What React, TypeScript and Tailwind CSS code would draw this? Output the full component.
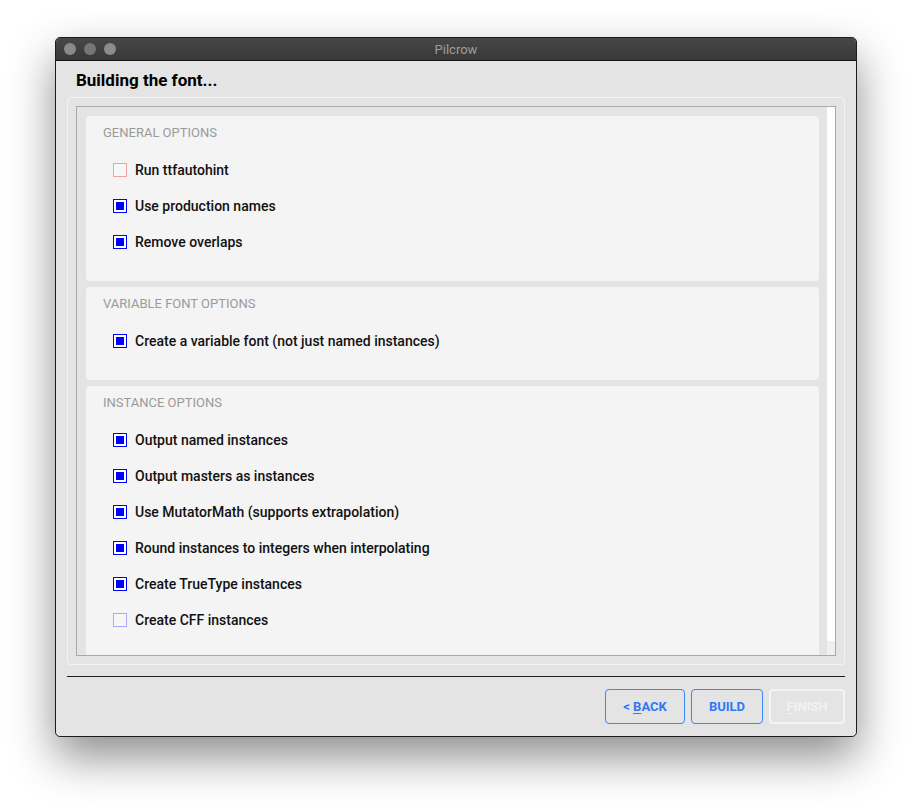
import React from 'react';

type Option = { label: string; checked: boolean; tone?: 'red' | 'blue' };
type Section = { title: string; options: Option[] };

const sections: Section[] = [
  {
    title: 'General options',
    options: [
      { label: 'Run ttfautohint', checked: false, tone: 'red' },
      { label: 'Use production names', checked: true },
      { label: 'Remove overlaps', checked: true },
    ],
  },
  {
    title: 'Variable font options',
    options: [{ label: 'Create a variable font (not just named instances)', checked: true }],
  },
  {
    title: 'Instance options',
    options: [
      { label: 'Output named instances', checked: true },
      { label: 'Output masters as instances', checked: true },
      { label: 'Use MutatorMath (supports extrapolation)', checked: true },
      { label: 'Round instances to integers when interpolating', checked: true },
      { label: 'Create TrueType instances', checked: true },
      { label: 'Create CFF instances', checked: false, tone: 'blue' },
    ],
  },
];

const CheckBox: React.FC<{ checked: boolean; tone?: 'red' | 'blue' }> = ({ checked, tone }) => {
  if (checked) {
    return (
      <span className="w-[14px] h-[14px] border border-[#0000ff] bg-white p-[2px] flex">
        <span className="flex-1 bg-[#0000ff]" />
      </span>
    );
  }
  return (
    <span
      className={`w-[14px] h-[14px] border bg-[#f7f7f7] ${
        tone === 'red' ? 'border-[#f2a3a3]' : 'border-[#aaaaf6]'
      }`}
    />
  );
};

const App: React.FC = () => {
  return (
    <div className="min-h-[810px] bg-white flex justify-center pt-[37px] font-[Roboto,sans-serif]">
      <div className="w-[802px] h-[700px] flex flex-col rounded-[5px] border border-[#1c1c1c] bg-[#e4e4e4] overflow-hidden shadow-[0_20px_45px_rgba(0,0,0,0.45)]">
        {/* title bar */}
        <div className="h-[23px] shrink-0 relative flex items-center bg-gradient-to-b from-[#474747] to-[#383838] border-b border-[#161616]">
          <div className="flex gap-[8px] pl-[8px]">
            <span className="w-[12px] h-[12px] rounded-full bg-[#8a8a8a]" />
            <span className="w-[12px] h-[12px] rounded-full bg-[#767676]" />
            <span className="w-[12px] h-[12px] rounded-full bg-[#8c8c8c]" />
          </div>
          <div className="absolute inset-0 flex items-center justify-center pt-px text-[13px] text-[#9e9e9e]">
            Pilcrow
          </div>
        </div>

        <div className="flex-1 flex flex-col px-[11px]">
          <div className="h-[36px] flex items-center pl-[9px] pt-[4px] text-[17px] font-bold text-black">
            Building the font...
          </div>

          {/* group box */}
          <div className="h-[568px] rounded-[4px] border border-[#f3f3f3] p-[8px] flex">
            <div className="flex-1 flex border border-[#a9a9a9] overflow-hidden">
              <div className="flex-1 flex flex-col gap-[6px] pl-[9px] pr-[8px] pt-[9px] overflow-hidden">
                {sections.map((s) => (
                  <div key={s.title} className="shrink-0 rounded-[4px] bg-[#f4f4f4] pl-[17px] pt-[9px] pb-[21px]">
                    <div className="h-[16px] flex items-center text-[13px] uppercase text-[#9a9a9a]">{s.title}</div>
                    <div className="mt-[11px] pl-[10px] flex flex-col">
                      {s.options.map((o) => (
                        <div key={o.label} className="h-[36px] flex items-center gap-[8px]">
                          <CheckBox checked={o.checked} tone={o.tone} />
                          <span className="text-[14px] font-medium text-[#111]">{o.label}</span>
                        </div>
                      ))}
                    </div>
                  </div>
                ))}
              </div>
              <div className="w-[8px] flex flex-col">
                <div className="flex-1 bg-white" />
                <div className="h-[14px] bg-[#f0f0f0]" />
              </div>
            </div>
          </div>

          <div className="mt-[11px] h-px bg-[#1f1f1f]" />

          <div className="mt-[12px] flex justify-end gap-[6px] text-[13px] font-bold">
            <button className="w-[80px] h-[35px] rounded-[4px] border border-[#3d86f5] text-[#2f7af3]">
              &lt; <span className="underline underline-offset-2">B</span>ACK
            </button>
            <button className="w-[72px] h-[35px] rounded-[4px] border border-[#3d86f5] text-[#2f7af3]">
              BUILD
            </button>
            <button className="w-[76px] h-[35px] rounded-[4px] border-2 border-[#f4f4f4] text-[#f2f2f2]">
              <span className="underline underline-offset-2">F</span>INISH
            </button>
          </div>
        </div>
      </div>
    </div>
  );
};

export default App;
